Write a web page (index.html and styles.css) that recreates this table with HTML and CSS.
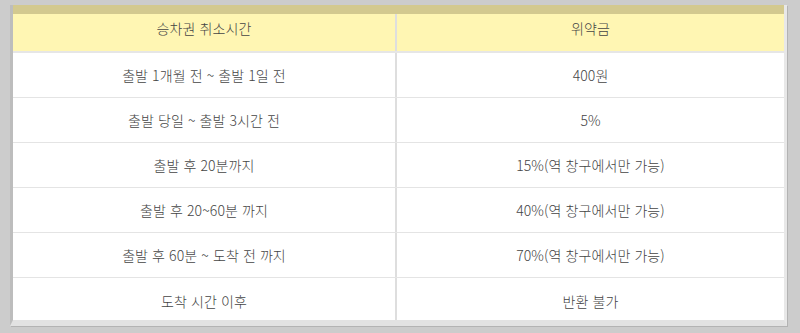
FILE: index.html
```html
<!DOCTYPE html>
<html lang="ko">
<head>
<meta charset="utf-8">
<link rel="stylesheet" href="styles.css">
</head>
<body>
<div class="frame">
  <div class="fees">
    <div class="row head"><div class="cell">승차권 취소시간</div><div class="cell">위약금</div></div>
    <div class="row"><div class="cell">출발 1개월 전 ~ 출발 1일 전</div><div class="cell">400원</div></div>
    <div class="row"><div class="cell">출발 당일 ~ 출발 3시간 전</div><div class="cell">5%</div></div>
    <div class="row"><div class="cell">출발 후 20분까지</div><div class="cell">15%(역 창구에서만 가능)</div></div>
    <div class="row"><div class="cell">출발 후 20~60분 까지</div><div class="cell">40%(역 창구에서만 가능)</div></div>
    <div class="row"><div class="cell">출발 후 60분 ~ 도착 전 까지</div><div class="cell">70%(역 창구에서만 가능)</div></div>
    <div class="row last"><div class="cell">도착 시간 이후</div><div class="cell">반환 불가</div></div>
  </div>
</div>
</body>
</html>
```
FILE: styles.css
```css
html, body {
  margin: 0;
  padding: 0;
  background: #cccccc;
  height: 333px;
  overflow: hidden;
}
body {
  padding-top: 5px;
  font-family: "Noto Sans CJK KR", "Noto Sans", sans-serif;
}
.frame {
  margin-left: 10px;
  width: 771px;
  border-left: 3px solid #bdbdbd;
  border-right: 3px solid #e8e8e8;
  border-bottom: 6px solid #e2e2e2;
  box-shadow: 1px 1px 0 #b3b3b3;
  background: #fff;
}
.row {
  display: grid;
  grid-template-columns: 384px 1fr;
  height: 45px;
  box-sizing: border-box;
  border-bottom: 1px solid #e4e4e4;
}
.row.head {
  height: 48px;
  background: #fff6b3;
  border-top: 9px solid #d3c98f;
  border-bottom: 2px solid #e6e6e6;
}
.row.head .cell {
  padding-bottom: 9px;
}
.row.last {
  height: 42px;
  border-bottom: 0;
}
.row.last .cell {
  padding-top: 3px;
}
.cell {
  display: flex;
  align-items: center;
  justify-content: center;
  font-size: 14px;
  font-weight: 300;
  color: #444;
  letter-spacing: 0.1px;
}
.cell:first-child {
  border-right: 2px solid #dedede;
}
```
